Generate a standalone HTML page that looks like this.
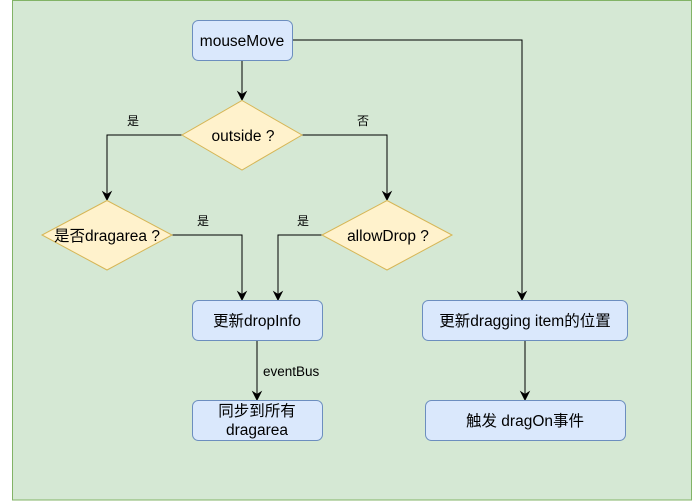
<!DOCTYPE html>
<html><head><meta charset="utf-8"><style>
html,body{margin:0;padding:0;background:#fff;width:693px;height:501px;overflow:hidden}
text{font-family:"Liberation Sans","Noto Sans CJK SC",sans-serif;fill:#000}
</style></head><body>
<svg width="693" height="501" viewBox="0 0 693 501" xmlns="http://www.w3.org/2000/svg">
<rect x="12.5" y="0.5" width="679" height="499.5" fill="#d5e8d4" stroke="#82b366"/>
<g fill="none" stroke="#000" stroke-width="1">
<path d="M242,60 V98"/><path d="M238,92 L242,100 L246,92 L242,94.5 Z" fill="#000"/>
<path d="M182,135 H107 V198"/><path d="M103,192 L107,200 L111,192 L107,194.5 Z" fill="#000"/>
<path d="M302,135 H387 V198"/><path d="M383,192 L387,200 L391,192 L387,194.5 Z" fill="#000"/>
<path d="M172,235 H242 V298"/><path d="M238,292 L242,300 L246,292 L242,294.5 Z" fill="#000"/>
<path d="M322,235 H278 V298"/><path d="M274,292 L278,300 L282,292 L278,294.5 Z" fill="#000"/>
<path d="M292,40 H522 V298"/><path d="M518,292 L522,300 L526,292 L522,294.5 Z" fill="#000"/>
<path d="M257,340 V398"/><path d="M253,392 L257,400 L261,392 L257,394.5 Z" fill="#000"/>
<path d="M525,340 V398"/><path d="M521,392 L525,400 L529,392 L525,394.5 Z" fill="#000"/>
</g>
<g fill="#dae8fc" stroke="#6c8ebf">
<rect x="192.5" y="20.5" width="100" height="40" rx="6"/>
<rect x="192.5" y="300.5" width="130" height="40" rx="6"/>
<rect x="192.5" y="400.5" width="130" height="40" rx="6"/>
<rect x="422.5" y="300.5" width="205" height="40" rx="6"/>
<rect x="425.5" y="400.5" width="200" height="40" rx="6"/>
</g>
<g fill="#fff2cc" stroke="#d6b656">
<path d="M242,100.5 L302,135 L242,170 L182,135 Z"/>
<path d="M107,200.5 L172,235 L107,270 L42,235 Z"/>
<path d="M387,200.5 L452,235 L387,270 L322,235 Z"/>
</g>
<g font-size="15.5" text-anchor="middle">
<text x="242" y="46">mouseMove</text>
<text x="243" y="141">outside ?</text>
<text x="107" y="241">是否dragarea ?</text>
<text x="388" y="241">allowDrop ?</text>
<text x="257" y="326">更新dropInfo</text>
<text x="525" y="326">更新dragging item的位置</text>
<text x="257" y="416">同步到所有</text>
<text x="257" y="435">dragarea</text>
<text x="525" y="426">触发 dragOn事件</text>
</g>
<g font-size="12" text-anchor="middle">
<text x="133" y="125">是</text>
<text x="363" y="125">否</text>
<text x="203" y="225">是</text>
<text x="303" y="225">是</text>
</g>
<text x="263" y="376" font-size="13.5">eventBus</text>
</svg>
</body></html>
